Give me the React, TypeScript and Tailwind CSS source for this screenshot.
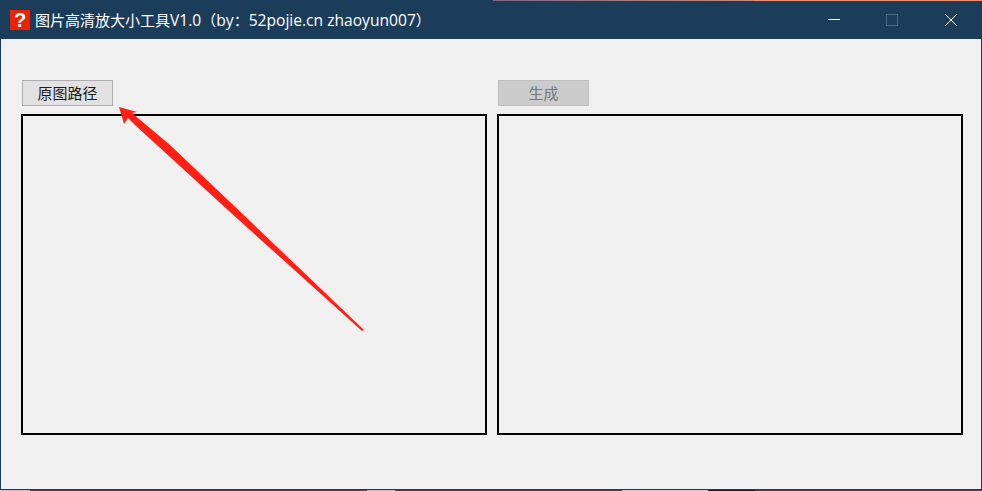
/**
 * Ventana de la herramienta: barra de título, dos botones y dos marcos.
 */
function BarraTitulo() {
    return (
        <div className="flex h-[38px] shrink-0 items-center bg-[#1c3d5a] pl-[9px] text-white">
            <div className="flex h-5 w-5 items-center justify-center bg-[#ee2200] font-['Liberation_Sans',sans-serif] text-[20px] leading-none font-bold">
                ?
            </div>
            <span className="ml-[5px] font-['Open_Sans','Noto_Sans_CJK_SC',sans-serif] text-[15px] leading-5 whitespace-nowrap">
                图片高清放大小工具<span className="text-[15.6px]">V1.0</span>（<span className="text-[15.6px]">by</span>：
                <span className="text-[15.6px]">52pojie.cn zhaoyun007</span>）
            </span>
            <div className="mr-6 ml-auto flex items-center">
                <svg width="12" height="12" viewBox="0 0 12 12" stroke="#ffffff" fill="none">
                    <path d="M0 5.5H12" />
                </svg>
                <div className="ml-[46px] h-3 w-3 border border-[#4d6a83]" />
                <svg className="ml-[47px]" width="12" height="12" viewBox="0 0 12 12" stroke="#ffffff" fill="none">
                    <path d="M0 0L12 12M12 0L0 12" />
                </svg>
            </div>
        </div>
    )
}

function Marco() {
    return <div className="h-[321px] w-[466px] border-2 border-black" />
}

export default function App() {
    return (
        <div className="relative flex h-[491px] w-[982px] flex-col overflow-hidden bg-[#f0f0f0] font-['Noto_Sans_CJK_SC','Noto_Sans',sans-serif]">
            {/* restos del escritorio por encima de la ventana */}
            <div className="flex h-px shrink-0">
                <div className="w-[493px] bg-[#1c3d5a]" />
                <div className="w-[260px] bg-gradient-to-r from-[#7d6a86] to-[#c98a7a]" />
                <div className="w-[229px] bg-[#ee8f70]" />
            </div>
            <div className="flex min-h-0 flex-1 flex-col border-x border-b border-[#1c3d5a]">
                <BarraTitulo />
                <div className="flex flex-1 gap-[10px] pt-[41px] pl-5">
                    <div className="flex flex-col items-start gap-2">
                        <button className="ml-px flex h-[26px] w-[91px] items-center justify-center border border-[#adadad] bg-[#e1e1e1] pb-[2px] text-[15px] leading-none text-[#1a1a1a]">
                            原图路径
                        </button>
                        <Marco />
                    </div>
                    <div className="flex flex-col items-start gap-2">
                        <button className="ml-px flex h-[26px] w-[91px] items-center justify-center border border-[#bfbfbf] bg-[#cccccc] pb-[2px] text-[15px] leading-none text-[#787878]">
                            生成
                        </button>
                        <Marco />
                    </div>
                </div>
            </div>
            {/* restos del escritorio por debajo de la ventana */}
            <div className="flex h-px shrink-0 bg-[#4a4458]">
                <div className="w-[30px] bg-[#b9c4d0]" />
                <div className="ml-[337px] w-[28px] bg-[#b9c4d0]" />
                <div className="ml-[227px] w-[86px] bg-[#c9ced6]" />
                <div className="w-[47px] bg-[#15202b]" />
            </div>
            <svg className="absolute top-0 left-0" width="982" height="491" viewBox="0 0 982 491">
                <polygon
                    points="119,107 137,112 132,113 170,145 230,202 364,330 362,331 230,212 170,157 136,126 128,118 124,124"
                    fill="#ff2015"
                />
            </svg>
        </div>
    )
}
